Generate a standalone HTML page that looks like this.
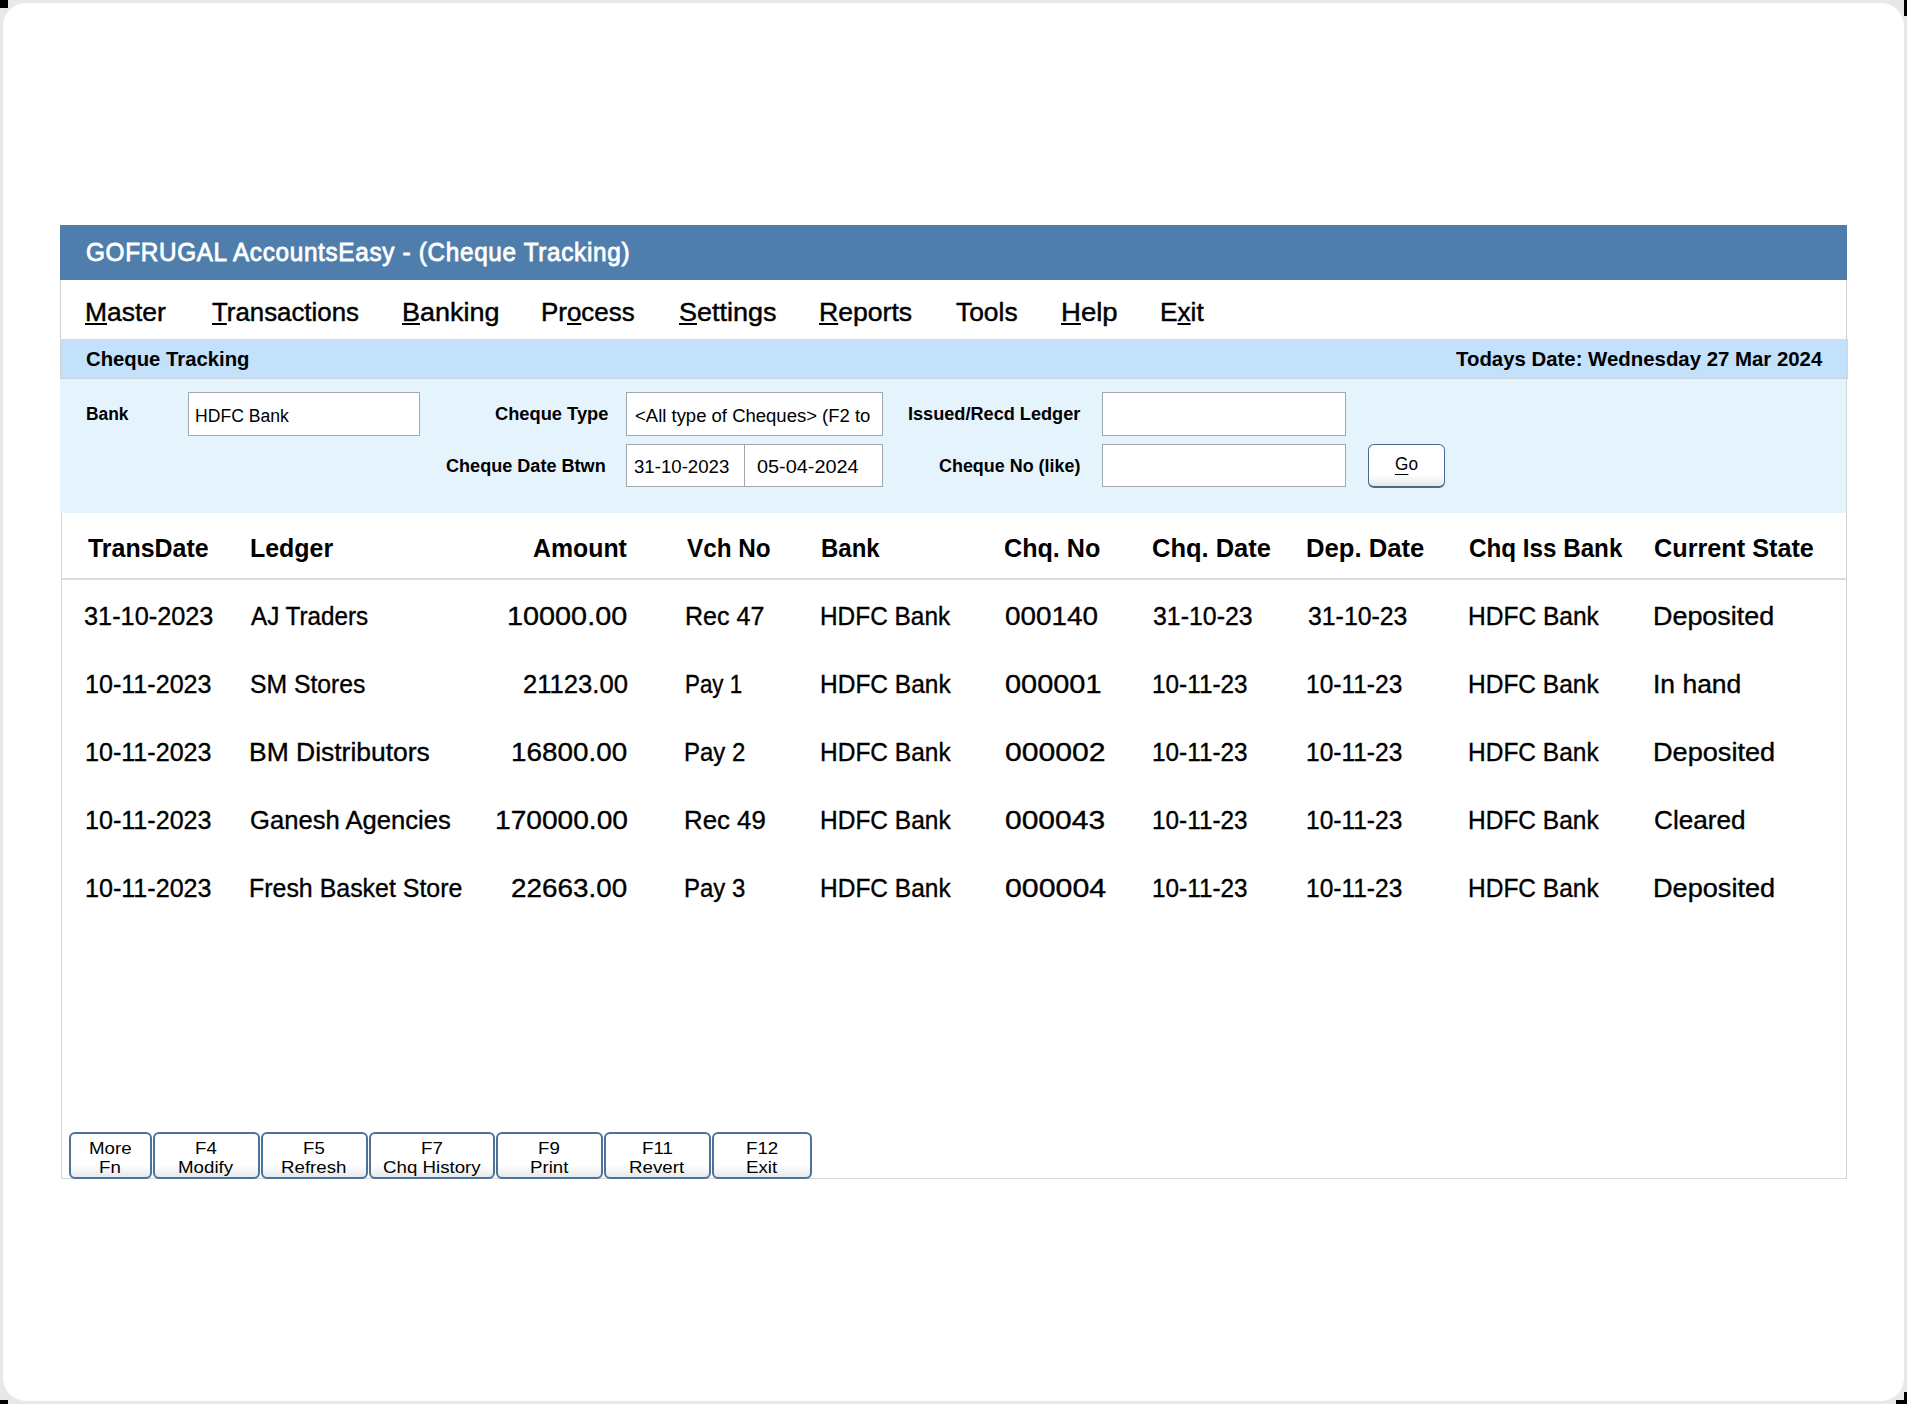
<!DOCTYPE html>
<html><head><meta charset="utf-8">
<style>
*{margin:0;padding:0;box-sizing:border-box}
html,body{width:1907px;height:1404px;overflow:hidden;background:#e8e8e8;font-family:"Liberation Sans",sans-serif;color:#000}
.a{position:absolute;white-space:nowrap}
.t{position:absolute;white-space:nowrap;transform-origin:0 0}
u{text-decoration:underline;text-decoration-thickness:2px;text-underline-offset:2px}
.btn{position:absolute;border:2px solid #4d7197;border-radius:6px;background:linear-gradient(#fff 0,#fff 72%,#e6e8eb 100%)}
</style></head><body>
<div class="a" style="left:3px;top:3px;width:1901px;height:1398px;background:#fff;border-radius:23px"></div>
<div class="a" style="left:0px;top:0px;width:8px;height:8px;background:#000"></div>
<div class="a" style="left:1904px;top:0px;width:3px;height:16px;background:#000"></div>
<div class="a" style="left:1904px;top:1392px;width:3px;height:12px;background:#000"></div>
<div class="a" style="left:1896px;top:1400px;width:11px;height:4px;background:#000"></div>
<div class="a" style="left:0px;top:1400px;width:8px;height:4px;background:#000"></div>
<div class="a" style="left:60px;top:225px;width:1787px;height:55px;background:#4f7eac"></div>
<div class="a" style="left:60px;top:280px;width:1px;height:98px;background:#d0d0d0"></div>
<div class="a" style="left:61px;top:513px;width:1px;height:666px;background:#d6d6d6"></div>
<div class="a" style="left:1846px;top:280px;width:1px;height:899px;background:#d2d2d2"></div>
<div class="a" style="left:60px;top:339px;width:1788px;height:40px;background:#c3e1fb;border-right:1px solid #cbd8e3;border-bottom:1px solid #cdd5dc;border-left:1px solid #cbd3da"></div>
<div class="a" style="left:60px;top:379px;width:1786px;height:134px;background:#e5f3fd"></div>
<div class="a" style="left:188px;top:392px;width:232px;height:44px;background:#fff;border:1.5px solid #a0a7ae"></div>
<div class="a" style="left:626px;top:392px;width:257px;height:44px;background:#fff;border:1.5px solid #a0a7ae"></div>
<div class="a" style="left:626px;top:444px;width:119px;height:43px;background:#fff;border:1.5px solid #a0a7ae"></div>
<div class="a" style="left:744px;top:444px;width:139px;height:43px;background:#fff;border:1.5px solid #a0a7ae"></div>
<div class="a" style="left:1102px;top:392px;width:244px;height:44px;background:#fff;border:1.5px solid #a0a7ae"></div>
<div class="a" style="left:1102px;top:444px;width:244px;height:43px;background:#fff;border:1.5px solid #a0a7ae"></div>
<div class="btn" style="left:1368px;top:443.5px;width:77px;height:44px;border-width:1.6px 1.8px 2.2px 1.6px;border-color:#486a8e"></div>
<div class="a" style="left:62px;top:578px;width:1784px;height:2px;background:#dcdcdc"></div>
<div class="a" style="left:61px;top:1178px;width:1786px;height:1px;background:#d6d6d6"></div>
<div class="btn" style="left:69px;top:1132px;width:83px;height:47px"></div>
<div class="btn" style="left:153px;top:1132px;width:107px;height:47px"></div>
<div class="btn" style="left:261px;top:1132px;width:107px;height:47px"></div>
<div class="btn" style="left:369px;top:1132px;width:126px;height:47px"></div>
<div class="btn" style="left:496px;top:1132px;width:107px;height:47px"></div>
<div class="btn" style="left:604px;top:1132px;width:107px;height:47px"></div>
<div class="btn" style="left:712px;top:1132px;width:100px;height:47px"></div>
<span class="t" style="left:85.63px;top:237.14px;font-size:25px;line-height:30.0px;color:#fff;-webkit-text-stroke:0.8px #fff;letter-spacing:0.7px;transform:scaleX(0.9719)">GOFRUGAL AccountsEasy - (Cheque Tracking)</span>
<span class="t" style="left:84.76px;top:297.19px;font-size:26px;line-height:31.2px;color:#000;-webkit-text-stroke:0.45px #000;transform:scaleX(1.0180)"><u>M</u>aster</span>
<span class="t" style="left:211.80px;top:297.19px;font-size:26px;line-height:31.2px;color:#000;-webkit-text-stroke:0.45px #000;transform:scaleX(0.9934)"><u>T</u>ransactions</span>
<span class="t" style="left:401.93px;top:297.19px;font-size:26px;line-height:31.2px;color:#000;-webkit-text-stroke:0.45px #000;transform:scaleX(1.0365)"><u>B</u>anking</span>
<span class="t" style="left:541.41px;top:297.19px;font-size:26px;line-height:31.2px;color:#000;-webkit-text-stroke:0.45px #000;transform:scaleX(0.9965)">Pr<u>o</u>cess</span>
<span class="t" style="left:678.96px;top:297.19px;font-size:26px;line-height:31.2px;color:#000;-webkit-text-stroke:0.45px #000;transform:scaleX(1.0382)"><u>S</u>ettings</span>
<span class="t" style="left:818.96px;top:297.19px;font-size:26px;line-height:31.2px;color:#000;-webkit-text-stroke:0.45px #000;transform:scaleX(1.0220)"><u>R</u>eports</span>
<span class="t" style="left:956.40px;top:297.19px;font-size:26px;line-height:31.2px;color:#000;-webkit-text-stroke:0.45px #000;transform:scaleX(1.0149)">Tools</span>
<span class="t" style="left:1060.88px;top:297.19px;font-size:26px;line-height:31.2px;color:#000;-webkit-text-stroke:0.45px #000;transform:scaleX(1.0586)"><u>H</u>elp</span>
<span class="t" style="left:1160.28px;top:297.19px;font-size:26px;line-height:31.2px;color:#000;-webkit-text-stroke:0.45px #000;transform:scaleX(1.0091)">E<u>x</u>it</span>
<span class="t" style="left:86.20px;top:347.48px;font-size:20.2px;line-height:24.24px;font-weight:bold;color:#000;transform:scaleX(1.0048)">Cheque Tracking</span>
<span class="t" style="left:1456.00px;top:347.48px;font-size:20.2px;line-height:24.24px;font-weight:bold;color:#000;transform:scaleX(1.0095)">Todays Date: Wednesday 27 Mar 2024</span>
<span class="t" style="left:86.33px;top:404.16px;font-size:18px;line-height:21.6px;font-weight:bold;color:#000;transform:scaleX(0.9658)">Bank</span>
<span class="t" style="left:194.92px;top:405.56px;font-size:18px;line-height:21.6px;color:#000;transform:scaleX(0.9769)">HDFC Bank</span>
<span class="t" style="left:494.60px;top:404.16px;font-size:18px;line-height:21.6px;font-weight:bold;color:#000;transform:scaleX(1.0155)">Cheque Type</span>
<span class="t" style="left:634.60px;top:405.56px;font-size:18px;line-height:21.6px;color:#000;transform:scaleX(1.0274)">&lt;All type of Cheques&gt; (F2 to</span>
<span class="t" style="left:446.30px;top:455.96px;font-size:18px;line-height:21.6px;font-weight:bold;color:#000;transform:scaleX(1.0043)">Cheque Date Btwn</span>
<span class="t" style="left:634.40px;top:457.26px;font-size:18px;line-height:21.6px;color:#000;transform:scaleX(1.0352)">31-10-2023</span>
<span class="t" style="left:757.40px;top:457.26px;font-size:18px;line-height:21.6px;color:#000;transform:scaleX(1.1036)">05-04-2024</span>
<span class="t" style="left:908.39px;top:404.16px;font-size:18px;line-height:21.6px;font-weight:bold;color:#000;transform:scaleX(1.0074)">Issued/Recd Ledger</span>
<span class="t" style="left:939.30px;top:455.96px;font-size:18px;line-height:21.6px;font-weight:bold;color:#000;transform:scaleX(0.9956)">Cheque No (like)</span>
<span class="t" style="left:1394.90px;top:454.04px;font-size:17.5px;line-height:21.0px;color:#000;transform:scaleX(0.9818)"><u style="text-decoration-thickness:1.3px;text-underline-offset:3.5px">G</u>o</span>
<span class="t" style="left:88.10px;top:533.24px;font-size:25px;line-height:30.0px;font-weight:bold;color:#000;transform:scaleX(0.9977)">TransDate</span>
<span class="t" style="left:250.00px;top:533.24px;font-size:25px;line-height:30.0px;font-weight:bold;color:#000;transform:scaleX(0.9973)">Ledger</span>
<span class="t" style="left:532.60px;top:533.24px;font-size:25px;line-height:30.0px;font-weight:bold;color:#000;transform:scaleX(0.9937)">Amount</span>
<span class="t" style="left:686.60px;top:533.24px;font-size:25px;line-height:30.0px;font-weight:bold;color:#000;transform:scaleX(0.9715)">Vch No</span>
<span class="t" style="left:821.04px;top:533.24px;font-size:25px;line-height:30.0px;font-weight:bold;color:#000;transform:scaleX(0.9597)">Bank</span>
<span class="t" style="left:1004.00px;top:533.24px;font-size:25px;line-height:30.0px;font-weight:bold;color:#000;transform:scaleX(1.0048)">Chq. No</span>
<span class="t" style="left:1151.98px;top:533.24px;font-size:25px;line-height:30.0px;font-weight:bold;color:#000;transform:scaleX(1.0193)">Chq. Date</span>
<span class="t" style="left:1306.47px;top:533.24px;font-size:25px;line-height:30.0px;font-weight:bold;color:#000;transform:scaleX(1.0253)">Dep. Date</span>
<span class="t" style="left:1468.53px;top:533.24px;font-size:25px;line-height:30.0px;font-weight:bold;color:#000;transform:scaleX(0.9684)">Chq Iss Bank</span>
<span class="t" style="left:1653.99px;top:533.24px;font-size:25px;line-height:30.0px;font-weight:bold;color:#000;transform:scaleX(1.0098)">Current State</span>
<span class="t" style="left:84.20px;top:600.94px;font-size:25px;line-height:30.0px;color:#000;-webkit-text-stroke:0.35px #000;transform:scaleX(1.0120)">31-10-2023</span>
<span class="t" style="left:251.00px;top:600.94px;font-size:25px;line-height:30.0px;color:#000;-webkit-text-stroke:0.35px #000;transform:scaleX(0.9683)">AJ Traders</span>
<span class="t" style="left:507.25px;top:600.94px;font-size:25px;line-height:30.0px;color:#000;-webkit-text-stroke:0.35px #000;transform:scaleX(1.1527)">10000.00</span>
<span class="t" style="left:684.60px;top:600.94px;font-size:25px;line-height:30.0px;color:#000;-webkit-text-stroke:0.35px #000;transform:scaleX(1.0012)">Rec 47</span>
<span class="t" style="left:820.05px;top:600.94px;font-size:25px;line-height:30.0px;color:#000;-webkit-text-stroke:0.35px #000;transform:scaleX(0.9760)">HDFC Bank</span>
<span class="t" style="left:1005.00px;top:600.94px;font-size:25px;line-height:30.0px;color:#000;-webkit-text-stroke:0.35px #000;transform:scaleX(1.1149)">000140</span>
<span class="t" style="left:1153.00px;top:600.94px;font-size:25px;line-height:30.0px;color:#000;-webkit-text-stroke:0.35px #000;transform:scaleX(0.9953)">31-10-23</span>
<span class="t" style="left:1307.50px;top:600.94px;font-size:25px;line-height:30.0px;color:#000;-webkit-text-stroke:0.35px #000;transform:scaleX(0.9932)">31-10-23</span>
<span class="t" style="left:1467.54px;top:600.94px;font-size:25px;line-height:30.0px;color:#000;-webkit-text-stroke:0.35px #000;transform:scaleX(0.9813)">HDFC Bank</span>
<span class="t" style="left:1652.85px;top:600.94px;font-size:25px;line-height:30.0px;color:#000;-webkit-text-stroke:0.35px #000;transform:scaleX(1.0760)">Deposited</span>
<span class="t" style="left:84.80px;top:668.94px;font-size:25px;line-height:30.0px;color:#000;-webkit-text-stroke:0.35px #000;transform:scaleX(1.0039)">10-11-2023</span>
<span class="t" style="left:250.01px;top:668.94px;font-size:25px;line-height:30.0px;color:#000;-webkit-text-stroke:0.35px #000;transform:scaleX(0.9896)">SM Stores</span>
<span class="t" style="left:522.58px;top:668.94px;font-size:25px;line-height:30.0px;color:#000;-webkit-text-stroke:0.35px #000;transform:scaleX(1.0247)">21123.00</span>
<span class="t" style="left:684.61px;top:668.94px;font-size:25px;line-height:30.0px;color:#000;-webkit-text-stroke:0.35px #000;transform:scaleX(0.8947)">Pay 1</span>
<span class="t" style="left:819.64px;top:668.94px;font-size:25px;line-height:30.0px;color:#000;-webkit-text-stroke:0.35px #000;transform:scaleX(0.9798)">HDFC Bank</span>
<span class="t" style="left:1004.50px;top:668.94px;font-size:25px;line-height:30.0px;color:#000;-webkit-text-stroke:0.35px #000;transform:scaleX(1.1573)">000001</span>
<span class="t" style="left:1151.83px;top:668.94px;font-size:25px;line-height:30.0px;color:#000;-webkit-text-stroke:0.35px #000;transform:scaleX(0.9729)">10-11-23</span>
<span class="t" style="left:1306.02px;top:668.94px;font-size:25px;line-height:30.0px;color:#000;-webkit-text-stroke:0.35px #000;transform:scaleX(0.9801)">10-11-23</span>
<span class="t" style="left:1467.74px;top:668.94px;font-size:25px;line-height:30.0px;color:#000;-webkit-text-stroke:0.35px #000;transform:scaleX(0.9798)">HDFC Bank</span>
<span class="t" style="left:1652.88px;top:668.94px;font-size:25px;line-height:30.0px;color:#000;-webkit-text-stroke:0.35px #000;transform:scaleX(1.0583)">In hand</span>
<span class="t" style="left:84.80px;top:736.94px;font-size:25px;line-height:30.0px;color:#000;-webkit-text-stroke:0.35px #000;transform:scaleX(1.0039)">10-11-2023</span>
<span class="t" style="left:248.88px;top:736.94px;font-size:25px;line-height:30.0px;color:#000;-webkit-text-stroke:0.35px #000;transform:scaleX(1.0584)">BM Distributors</span>
<span class="t" style="left:511.49px;top:736.94px;font-size:25px;line-height:30.0px;color:#000;-webkit-text-stroke:0.35px #000;transform:scaleX(1.1136)">16800.00</span>
<span class="t" style="left:684.48px;top:736.94px;font-size:25px;line-height:30.0px;color:#000;-webkit-text-stroke:0.35px #000;transform:scaleX(0.9603)">Pay 2</span>
<span class="t" style="left:819.64px;top:736.94px;font-size:25px;line-height:30.0px;color:#000;-webkit-text-stroke:0.35px #000;transform:scaleX(0.9798)">HDFC Bank</span>
<span class="t" style="left:1004.50px;top:736.94px;font-size:25px;line-height:30.0px;color:#000;-webkit-text-stroke:0.35px #000;transform:scaleX(1.2058)">000002</span>
<span class="t" style="left:1151.83px;top:736.94px;font-size:25px;line-height:30.0px;color:#000;-webkit-text-stroke:0.35px #000;transform:scaleX(0.9729)">10-11-23</span>
<span class="t" style="left:1306.02px;top:736.94px;font-size:25px;line-height:30.0px;color:#000;-webkit-text-stroke:0.35px #000;transform:scaleX(0.9801)">10-11-23</span>
<span class="t" style="left:1467.74px;top:736.94px;font-size:25px;line-height:30.0px;color:#000;-webkit-text-stroke:0.35px #000;transform:scaleX(0.9798)">HDFC Bank</span>
<span class="t" style="left:1652.83px;top:736.94px;font-size:25px;line-height:30.0px;color:#000;-webkit-text-stroke:0.35px #000;transform:scaleX(1.0851)">Deposited</span>
<span class="t" style="left:84.80px;top:804.94px;font-size:25px;line-height:30.0px;color:#000;-webkit-text-stroke:0.35px #000;transform:scaleX(1.0039)">10-11-2023</span>
<span class="t" style="left:249.98px;top:804.94px;font-size:25px;line-height:30.0px;color:#000;-webkit-text-stroke:0.35px #000;transform:scaleX(1.0242)">Ganesh Agencies</span>
<span class="t" style="left:494.68px;top:804.94px;font-size:25px;line-height:30.0px;color:#000;-webkit-text-stroke:0.35px #000;transform:scaleX(1.1249)">170000.00</span>
<span class="t" style="left:684.33px;top:804.94px;font-size:25px;line-height:30.0px;color:#000;-webkit-text-stroke:0.35px #000;transform:scaleX(1.0327)">Rec 49</span>
<span class="t" style="left:819.64px;top:804.94px;font-size:25px;line-height:30.0px;color:#000;-webkit-text-stroke:0.35px #000;transform:scaleX(0.9798)">HDFC Bank</span>
<span class="t" style="left:1004.50px;top:804.94px;font-size:25px;line-height:30.0px;color:#000;-webkit-text-stroke:0.35px #000;transform:scaleX(1.1997)">000043</span>
<span class="t" style="left:1151.83px;top:804.94px;font-size:25px;line-height:30.0px;color:#000;-webkit-text-stroke:0.35px #000;transform:scaleX(0.9729)">10-11-23</span>
<span class="t" style="left:1306.02px;top:804.94px;font-size:25px;line-height:30.0px;color:#000;-webkit-text-stroke:0.35px #000;transform:scaleX(0.9801)">10-11-23</span>
<span class="t" style="left:1467.74px;top:804.94px;font-size:25px;line-height:30.0px;color:#000;-webkit-text-stroke:0.35px #000;transform:scaleX(0.9798)">HDFC Bank</span>
<span class="t" style="left:1653.95px;top:804.94px;font-size:25px;line-height:30.0px;color:#000;-webkit-text-stroke:0.35px #000;transform:scaleX(1.0462)">Cleared</span>
<span class="t" style="left:84.80px;top:872.94px;font-size:25px;line-height:30.0px;color:#000;-webkit-text-stroke:0.35px #000;transform:scaleX(1.0039)">10-11-2023</span>
<span class="t" style="left:249.01px;top:872.94px;font-size:25px;line-height:30.0px;color:#000;-webkit-text-stroke:0.35px #000;transform:scaleX(0.9973)">Fresh Basket Store</span>
<span class="t" style="left:511.49px;top:872.94px;font-size:25px;line-height:30.0px;color:#000;-webkit-text-stroke:0.35px #000;transform:scaleX(1.1136)">22663.00</span>
<span class="t" style="left:684.48px;top:872.94px;font-size:25px;line-height:30.0px;color:#000;-webkit-text-stroke:0.35px #000;transform:scaleX(0.9603)">Pay 3</span>
<span class="t" style="left:819.64px;top:872.94px;font-size:25px;line-height:30.0px;color:#000;-webkit-text-stroke:0.35px #000;transform:scaleX(0.9798)">HDFC Bank</span>
<span class="t" style="left:1004.50px;top:872.94px;font-size:25px;line-height:30.0px;color:#000;-webkit-text-stroke:0.35px #000;transform:scaleX(1.2129)">000004</span>
<span class="t" style="left:1151.83px;top:872.94px;font-size:25px;line-height:30.0px;color:#000;-webkit-text-stroke:0.35px #000;transform:scaleX(0.9729)">10-11-23</span>
<span class="t" style="left:1306.02px;top:872.94px;font-size:25px;line-height:30.0px;color:#000;-webkit-text-stroke:0.35px #000;transform:scaleX(0.9801)">10-11-23</span>
<span class="t" style="left:1467.74px;top:872.94px;font-size:25px;line-height:30.0px;color:#000;-webkit-text-stroke:0.35px #000;transform:scaleX(0.9798)">HDFC Bank</span>
<span class="t" style="left:1652.83px;top:872.94px;font-size:25px;line-height:30.0px;color:#000;-webkit-text-stroke:0.35px #000;transform:scaleX(1.0851)">Deposited</span>
<span class="t" style="left:88.90px;top:1138.91px;font-size:17px;line-height:20.4px;color:#000;transform:scaleX(1.1000)">More</span>
<span class="t" style="left:99.29px;top:1158.11px;font-size:17px;line-height:20.4px;color:#000;transform:scaleX(1.1000)">Fn</span>
<span class="t" style="left:195.29px;top:1138.91px;font-size:17px;line-height:20.4px;color:#000;transform:scaleX(1.1000)">F4</span>
<span class="t" style="left:178.14px;top:1158.11px;font-size:17px;line-height:20.4px;color:#000;transform:scaleX(1.1000)">Modify</span>
<span class="t" style="left:303.29px;top:1138.91px;font-size:17px;line-height:20.4px;color:#000;transform:scaleX(1.1000)">F5</span>
<span class="t" style="left:281.46px;top:1158.11px;font-size:17px;line-height:20.4px;color:#000;transform:scaleX(1.1000)">Refresh</span>
<span class="t" style="left:420.79px;top:1138.91px;font-size:17px;line-height:20.4px;color:#000;transform:scaleX(1.1000)">F7</span>
<span class="t" style="left:382.88px;top:1158.11px;font-size:17px;line-height:20.4px;color:#000;transform:scaleX(1.1000)">Chq History</span>
<span class="t" style="left:538.29px;top:1138.91px;font-size:17px;line-height:20.4px;color:#000;transform:scaleX(1.1000)">F9</span>
<span class="t" style="left:529.57px;top:1158.11px;font-size:17px;line-height:20.4px;color:#000;transform:scaleX(1.1000)">Print</span>
<span class="t" style="left:641.78px;top:1138.91px;font-size:17px;line-height:20.4px;color:#000;transform:scaleX(1.1000)">F11</span>
<span class="t" style="left:629.26px;top:1158.11px;font-size:17px;line-height:20.4px;color:#000;transform:scaleX(1.1000)">Revert</span>
<span class="t" style="left:745.59px;top:1138.91px;font-size:17px;line-height:20.4px;color:#000;transform:scaleX(1.1000)">F12</span>
<span class="t" style="left:745.71px;top:1158.11px;font-size:17px;line-height:20.4px;color:#000;transform:scaleX(1.1000)">Exit</span>
</body></html>
